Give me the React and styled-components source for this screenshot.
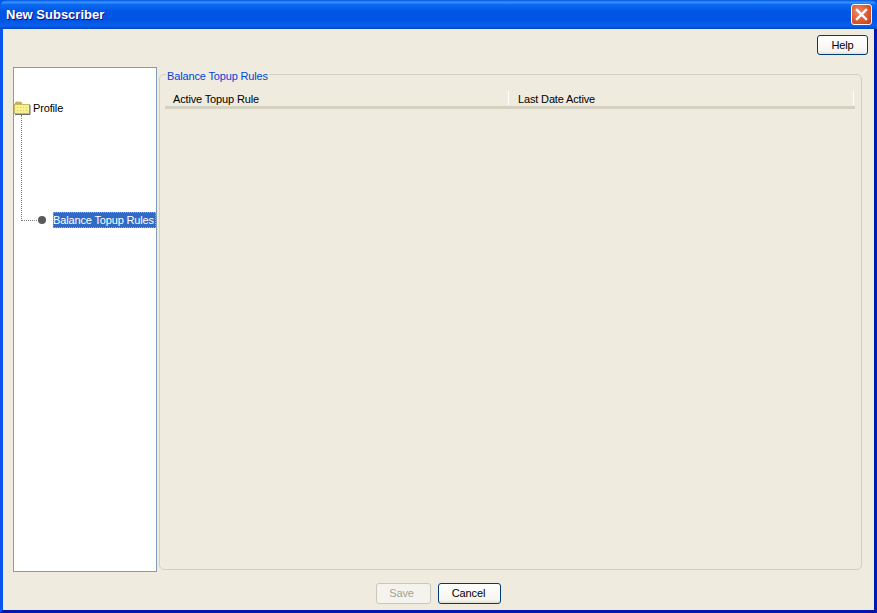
import React from 'react';
import styled, { createGlobalStyle } from 'styled-components';

const GlobalStyle = createGlobalStyle`
    html, body {
        margin : 0;
        padding : 0;
        background : #0058e6;
    }
    * {
        box-sizing : border-box;
    }
`;

const Window = styled.div`
    width : 877px;
    height : 613px;
    display : flex;
    flex-direction : column;
    font-family : "Liberation Sans", Arial, sans-serif;
    font-size : 11px;
    letter-spacing : -0.15px;
    color : #000;
    overflow : hidden;
    border-radius : 7px 7px 0 0;
`;

const TitleBar = styled.div`
    height : 29px;
    flex : none;
    display : flex;
    align-items : center;
    justify-content : space-between;
    padding : 0 5px 0 6px;
    background : linear-gradient(180deg, #0058e6 0%, #3a93ff 8%, #0a6af0 16%, #0055e5 40%, #0054e3 70%, #0a60ee 88%, #0047c8 100%);
`;

const Title = styled.span`
    color : #fff;
    font-size : 13px;
    font-weight : bold;
    letter-spacing : 0;
    text-shadow : 1px 1px 0 #0f1089;
`;

const CloseButton = styled.div`
    width : 21px;
    height : 21px;
    display : flex;
    align-items : center;
    justify-content : center;
    border : 1px solid #fff;
    border-radius : 3px;
    background : radial-gradient(circle at 35% 35%, #ef8b6a 0%, #e0562f 55%, #c23c1a 100%);
`;

const Body = styled.div`
    flex : 1;
    min-height : 0;
    display : flex;
    flex-direction : column;
    padding : 6px 6px 6px 10px;
    background : #efebde;
    border-left : 3px solid #0a55f0;
    border-right : 3px solid #0019b5;
    border-bottom : 3px solid #0018b0;
`;

const TopRow = styled.div`
    display : flex;
    justify-content : flex-end;
    height : 20px;
    flex : none;
`;

const Button = styled.button`
    width : ${(p) => p.$width}px;
    height : ${(p) => p.$height || 21}px;
    padding : 0 ${(p) => p.$nudge || 0}px 1px 0;
    font-family : "Liberation Sans", Arial, sans-serif;
    font-size : 11px;
    letter-spacing : -0.15px;
    color : ${(p) => (p.disabled ? '#a5a294' : '#000')};
    border : 1px solid ${(p) => (p.disabled ? '#c9c7ba' : '#003c74')};
    border-radius : 3px;
    background : ${(p) => (p.disabled ? '#f4f3ee' : 'linear-gradient(180deg, #fff 0%, #f6f5ef 85%, #e3e0d2 100%)')};
`;

const Main = styled.div`
    flex : none;
    height : 505px;
    margin-top : 12px;
    display : flex;
    gap : 2px;
`;

const TreePanel = styled.div`
    width : 144px;
    flex : none;
    background : #fff;
    border : 1px solid #7f9db9;
    padding-top : 33px;
`;

const ProfileRow = styled.div`
    display : flex;
    align-items : center;
    height : 14px;
    gap : 2px;
`;

const Branch = styled.div`
    display : flex;
    align-items : flex-end;
    margin-left : 7px;
`;

const Elbow = styled.div`
    width : 16px;
    height : 106px;
    flex : none;
    border-left : 1px dotted #808080;
    border-bottom : 1px dotted #808080;
`;

const Leaf = styled.div`
    display : flex;
    align-items : center;
    margin-bottom : -7px;
    margin-left : 1px;
`;

const Dot = styled.span`
    width : 8px;
    height : 8px;
    flex : none;
    border-radius : 50%;
    background : #5a5a5a;
    margin-right : 7px;
`;

const Selected = styled.span`
    width : 103px;
    height : 16px;
    line-height : 16px;
    white-space : nowrap;
    color : #fff;
    background : #316ac5;
    outline : 1px dotted #d8a040;
    outline-offset : -1px;
`;

const GroupBox = styled.fieldset`
    flex : none;
    width : 703px;
    height : 504px;
    margin : -1px 0 0 0;
    padding : 0 5px;
    border : 1px solid #d4d0bf;
    border-radius : 5px;
    min-width : 0;
`;

const Legend = styled.legend`
    color : #0046d5;
    font-size : 11px;
    line-height : 13px;
    margin-left : 1px;
    padding : 4px 1px 0 1px;
`;

const HeaderRow = styled.div`
    display : flex;
    height : 18px;
    margin : 8px 1px 0 0;
    border-bottom : 3px solid #d6d2c2;
`;

const HeaderCell = styled.div`
    width : ${(p) => p.$width}px;
    flex : none;
    height : 14px;
    padding : 2px 0 0 ${(p) => p.$pad}px;
    line-height : 13px;
    box-shadow : inset -1px 0 0 #fff;
    white-space : nowrap;
`;

const Footer = styled.div`
    flex : 1;
    display : flex;
    align-items : flex-end;
    justify-content : center;
    gap : 7px;
    padding-right : 5px;
`;

function FolderIcon() {
    return (
        <svg width="17" height="14" viewBox="0 0 17 14">
            <defs>
                <pattern id="dither" width="3" height="3" patternUnits="userSpaceOnUse">
                    <rect width="3" height="3" fill="#f7f08e" />
                    <rect width="1" height="1" fill="#d9cf6a" />
                </pattern>
            </defs>
            <path d="M1 3 L2 1 H7 L8 3 Z" fill="#cdbd60" stroke="#a89a4c" strokeWidth="0.6" />
            <rect x="0.5" y="3.5" width="15" height="9" fill="url(#dither)" stroke="#c8b860" />
            <path d="M16 4 V13.5 H1" fill="none" stroke="#6c6c6c" strokeWidth="1" />
        </svg>
    );
}

function CloseIcon() {
    return (
        <svg width="13" height="13" viewBox="0 0 13 13">
            <path d="M2 2 L11 11 M11 2 L2 11" stroke="#fff" strokeWidth="2.4" strokeLinecap="square" />
        </svg>
    );
}

export default function App() {
    return (
        <Window>
            <GlobalStyle />
            <TitleBar>
                <Title>New Subscriber</Title>
                <CloseButton><CloseIcon /></CloseButton>
            </TitleBar>
            <Body>
                <TopRow>
                    <Button $width={51} $height={20}>Help</Button>
                </TopRow>
                <Main>
                    <TreePanel>
                        <ProfileRow>
                            <FolderIcon />
                            <span>Profile</span>
                        </ProfileRow>
                        <Branch>
                            <Elbow />
                            <Leaf>
                                <Dot />
                                <Selected>Balance Topup Rules</Selected>
                            </Leaf>
                        </Branch>
                    </TreePanel>
                    <GroupBox>
                        <Legend>Balance Topup Rules</Legend>
                        <HeaderRow>
                            <HeaderCell $width={344} $pad={8}>Active Topup Rule</HeaderCell>
                            <HeaderCell $width={345} $pad={9}>Last Date Active</HeaderCell>
                        </HeaderRow>
                    </GroupBox>
                </Main>
                <Footer>
                    <Button $width={55} $nudge={3} disabled>Save</Button>
                    <Button $width={63} $nudge={1}>Cancel</Button>
                </Footer>
            </Body>
        </Window>
    );
}
